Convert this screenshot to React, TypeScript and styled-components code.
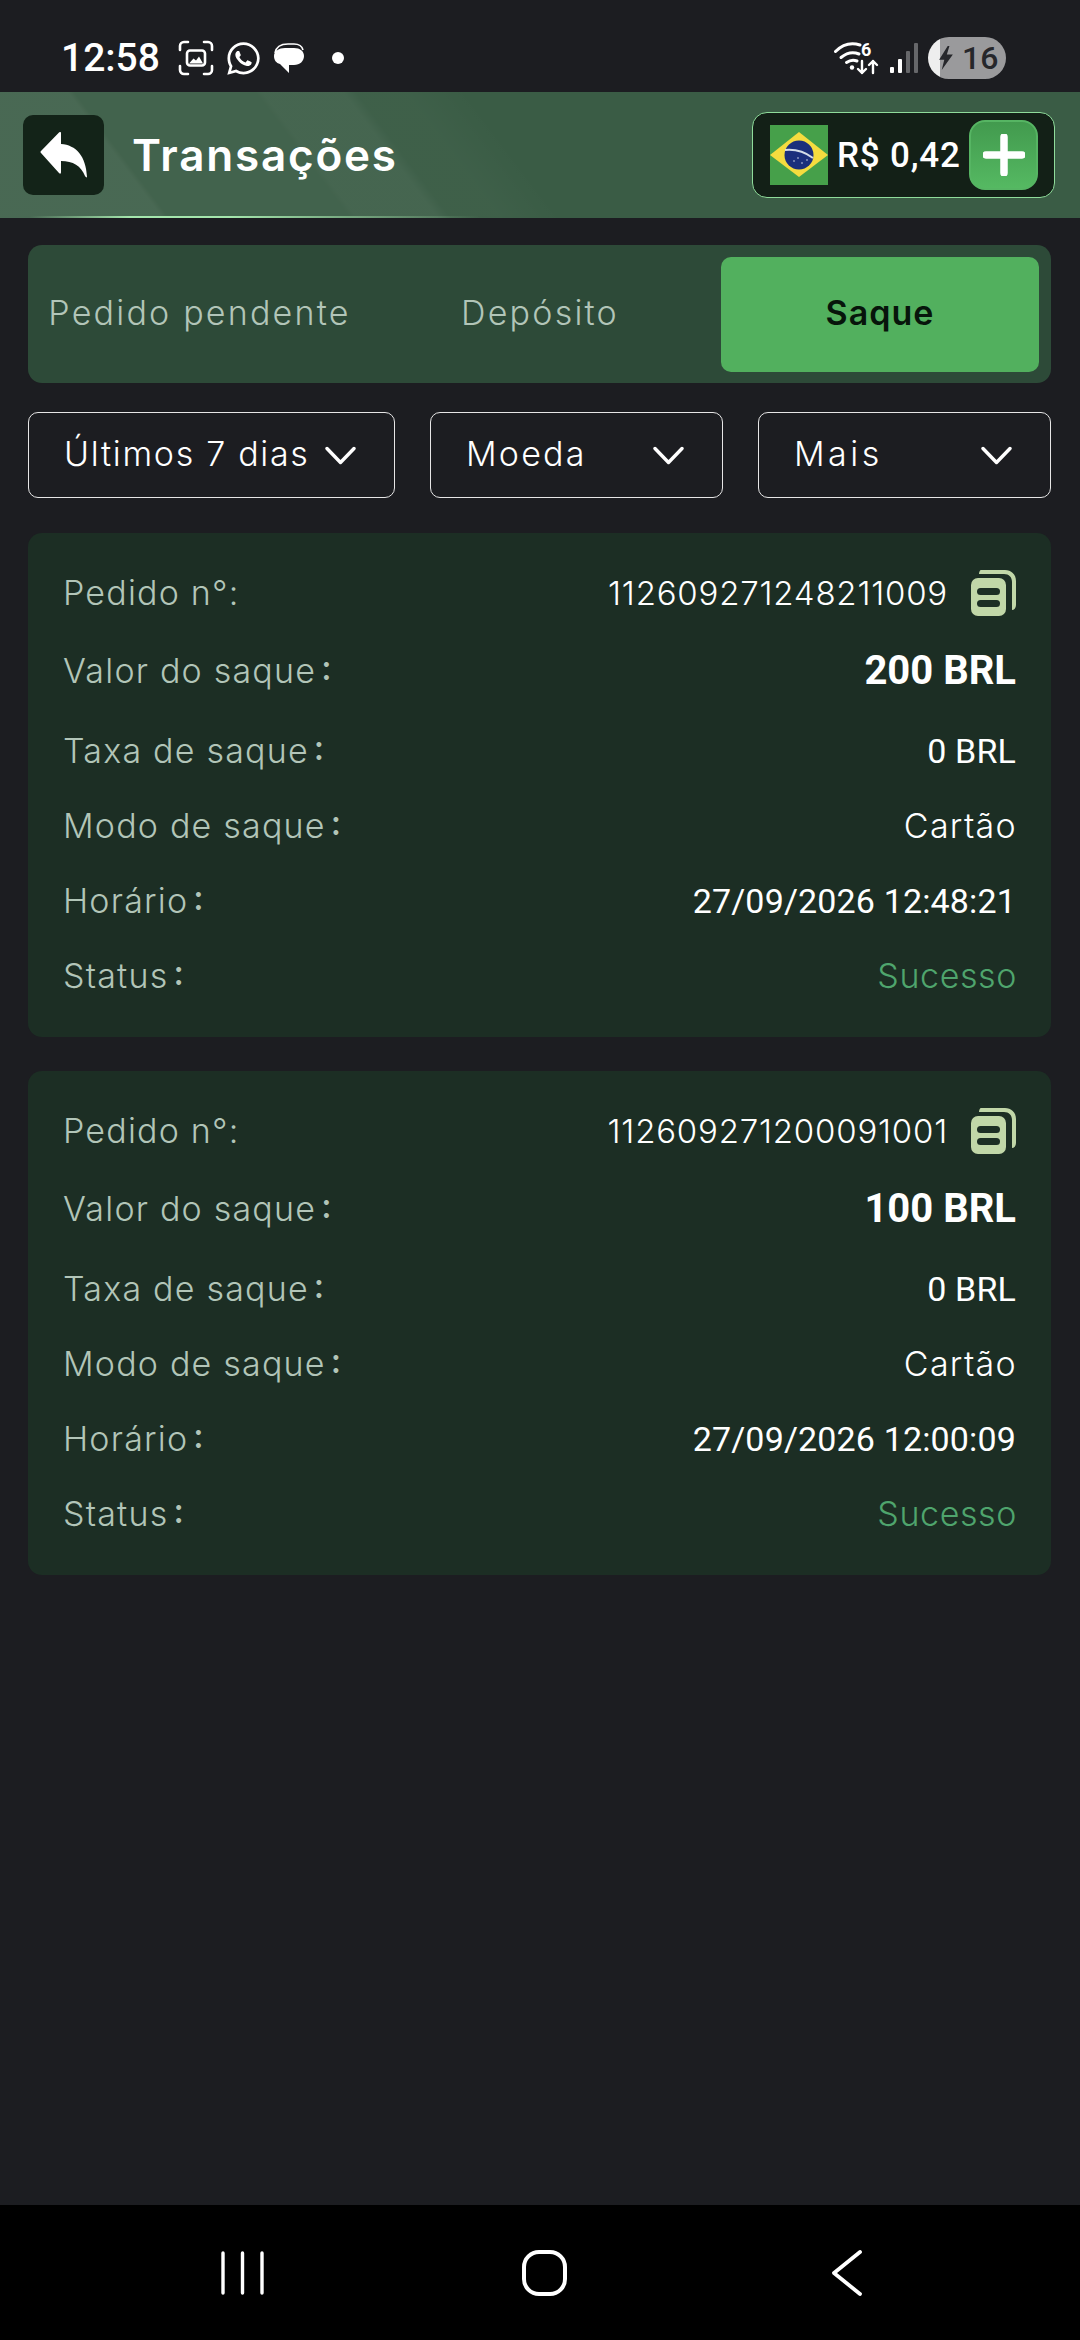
import React from "react"
import styled, { createGlobalStyle } from "styled-components"
import { FaWhatsapp } from "react-icons/fa"

const GlobalStyle = createGlobalStyle`
  html, body {
    margin: 0;
    padding: 0;
    background: #1c1d21;
  }
  * {
    box-sizing: border-box;
  }
`

const sans = `Inter, "Open Sans", sans-serif`
const roboto = `Roboto, "Liberation Sans", sans-serif`

const Page = styled.div`
  width: 1080px;
  height: 2340px;
  display: flex;
  flex-direction: column;
  background: #1c1d21;
  overflow: hidden;
`

const StatusBar = styled.div`
  height: 92px;
  flex: none;
  display: flex;
  align-items: center;
  padding: 24px 74px 0 61px;
  color: #fff;
`

const Clock = styled.span`
  font-family: ${roboto};
  font-weight: 500;
  font-size: 39px;
  width: 117px;
`

const StatusIcons = styled.div`
  display: flex;
  align-items: center;
  gap: 11px;
`

const StatusDot = styled.span`
  width: 12px;
  height: 12px;
  border-radius: 50%;
  background: #fff;
  margin-left: 16px;
`

const StatusRight = styled.div`
  margin-left: auto;
  display: flex;
  align-items: center;
  gap: 10px;
`

const WifiWrap = styled.div`
  position: relative;
  width: 46px;
  height: 34px;
`

const WifiBadge = styled.span`
  position: absolute;
  top: 0;
  left: 27px;
  color: #fff;
  font-family: ${roboto};
  font-weight: 700;
  font-size: 18px;
  line-height: 18px;
`

const Battery = styled.div`
  width: 78px;
  height: 42px;
  border-radius: 21px;
  display: flex;
  align-items: center;
  gap: 9px;
  padding-left: 11px;
  color: #26272b;
  font-family: ${roboto};
  font-weight: 500;
  font-size: 32px;
  background: linear-gradient(90deg, #eee 0 12px, #9a9a9c 12px);
`

const Header = styled.header`
  height: 126px;
  flex: none;
  display: flex;
  align-items: center;
  padding: 0 25px 0 23px;
  background:
    linear-gradient(90deg, transparent 30px, #a5e6ad 130px, #a5e6ad 230px, transparent 480px) bottom / 100% 2px no-repeat,
    linear-gradient(53deg,
      rgba(255,255,255,.08) 0 130px,
      rgba(255,255,255,.045) 135px 280px,
      rgba(255,255,255,.06) 285px 350px,
      rgba(255,255,255,.025) 360px 400px,
      transparent 450px),
    #3a5c45;
`

const BackButton = styled.button`
  width: 81px;
  height: 80px;
  border: 0;
  padding: 0;
  border-radius: 10px;
  background: #132318;
  display: flex;
  align-items: center;
  justify-content: center;
`

const Title = styled.h1`
  margin: 0 0 0 28px;
  color: #fff;
  font-family: ${sans};
  font-weight: 600;
  font-size: 44px;
  letter-spacing: 1.8px;
`

const Wallet = styled.div`
  margin-left: auto;
  width: 303px;
  height: 86px;
  border: 1.5px solid #8fdc9b;
  border-radius: 15px;
  background: #132017;
  display: flex;
  align-items: center;
  padding: 0 16px 0 17px;
`

const Balance = styled.span`
  margin-left: 9px;
  color: #fff;
  font-family: ${roboto};
  font-weight: 500;
  font-size: 35px;
  letter-spacing: 0.8px;
`

const PlusButton = styled.button`
  margin-left: auto;
  width: 69px;
  height: 70px;
  border: 2px solid #56b563;
  padding: 0;
  border-radius: 16px;
  background: linear-gradient(180deg, #429a4e, #55b962);
  display: flex;
  align-items: center;
  justify-content: center;
`

const Content = styled.main`
  flex: 1;
  display: flex;
  flex-direction: column;
  padding: 27px 29px 0 28px;
`

const Tabs = styled.div`
  height: 138px;
  border-radius: 14px;
  background: #2d4a38;
  display: grid;
  grid-template-columns: 335px 346px 1fr;
  align-items: center;
  padding: 0 12px 0 4px;
`

const Tab = styled.div<{ $active?: boolean }>`
  height: 115px;
  display: flex;
  align-items: center;
  justify-content: center;
  padding-bottom: 3px;
  margin-left: ${(p) => (p.$active ? "8px" : "0")};
  border-radius: 10px;
  font-family: ${sans};
  font-size: 34px;
  font-weight: ${(p) => (p.$active ? 600 : 300)};
  letter-spacing: ${(p) => (p.$active ? "1px" : "2.2px")};
  white-space: nowrap;
  color: ${(p) => (p.$active ? "#07150b" : "#b2c5b8")};
  background: ${(p) => (p.$active ? "#52b05e" : "transparent")};
`

const Filters = styled.div`
  margin-top: 29px;
  display: grid;
  grid-template-columns: 367px 293px 293px;
  justify-content: space-between;
`

const Filter = styled.div<{ $spacing: number }>`
  height: 86px;
  border: 1.5px solid #e6e6e6;
  border-radius: 10px;
  display: flex;
  align-items: center;
  justify-content: space-between;
  padding: 0 38px 3px 35px;
  color: #fff;
  font-family: ${sans};
  font-weight: 300;
  font-size: 34px;
  letter-spacing: ${(p) => p.$spacing}px;
`

const Chevron = styled.svg`
  flex: none;
  margin-top: 3px;
`

const Card = styled.section`
  margin-top: 35px;
  border-radius: 14px;
  background: #1c2e24;
  padding: 24px 35px 24px;
  display: flex;
  flex-direction: column;

  & + & {
    margin-top: 34px;
  }
`

const Row = styled.div<{ $h: number }>`
  height: ${(p) => p.$h}px;
  display: flex;
  align-items: center;
  justify-content: space-between;
`

const Label = styled.span`
  color: #b2c5b8;
  font-family: ${sans};
  font-weight: 300;
  font-size: 34px;
  letter-spacing: 1.2px;
`

const Colon = styled.span`
  display: inline-block;
  margin-left: 5px;
  line-height: 0;
  vertical-align: 3px;
  font-weight: 500;
`

const OrderValue = styled.div`
  display: flex;
  align-items: center;
  gap: 23px;
  color: #fff;
  font-family: ${sans};
  font-weight: 300;
  font-size: 33px;
  letter-spacing: 0.8px;
`

const Amount = styled.span`
  color: #fff;
  font-family: ${roboto};
  font-weight: 700;
  font-size: 40px;
`

const Plain = styled.span`
  color: #fff;
  font-family: ${roboto};
  font-weight: 400;
  font-size: 34px;
  letter-spacing: 0.15px;
`

const Method = styled.span<{ $success?: boolean }>`
  margin-right: -1px;
  color: ${(p) => (p.$success ? "#4fa56d" : "#fff")};
  font-family: ${sans};
  font-weight: 300;
  font-size: 34px;
  letter-spacing: ${(p) => (p.$success ? "0.6px" : "1.3px")};
`

const Spacer = styled.div`
  flex: 1;
`

const NavBar = styled.nav`
  height: 135px;
  flex: none;
  background: #000;
  display: grid;
  grid-template-columns: 221px 43px 258px 45px 265px 30px 218px;
  align-items: center;
`

const NavIcon = styled.svg<{ $col: number }>`
  grid-column: ${(p) => p.$col};
  display: block;
`

const ScanIcon = () => (
  <svg width="36" height="36" viewBox="0 0 36 36" fill="none">
    <path
      d="M2 10V6a4 4 0 0 1 4-4h4M26 2h4a4 4 0 0 1 4 4v4M34 26v4a4 4 0 0 1-4 4h-4M10 34H6a4 4 0 0 1-4-4v-4"
      stroke="#fff"
      strokeWidth="2.6"
      strokeLinecap="round"
    />
    <rect x="9" y="10.5" width="18" height="15" rx="3" stroke="#fff" strokeWidth="2.6" />
    <path d="M11 23.5l4.5-5 2.5 2 3-4 4 7z" fill="#fff" />
  </svg>
)

const BubbleIcon = () => (
  <svg width="32" height="32" viewBox="0 0 32 32">
    <path d="M2 11C3 5 8 2 15 2h6c4 0 8 2 9 6" fill="none" stroke="#fff" strokeWidth="1.6" />
    <path
      d="M1 14c0-5 5-8 11-8h9c6 0 10 3 10 8s-4 9-10 9h-5v8L7 22c-4-1-6-4-6-8z"
      fill="#fff"
    />
  </svg>
)

const WifiIcon = () => (
  <WifiWrap>
    <svg width="46" height="34" viewBox="0 0 46 34" fill="none">
      <path d="M1.5 10.5C9 3 18 1.500 26 4" stroke="#fff" strokeWidth="3" strokeLinecap="round" />
      <path d="M7 16.5c6-5 12-6 18-3.500" stroke="#fff" strokeWidth="3" strokeLinecap="round" />
      <path d="M12.5 21.5c3.5-2.5 7-3 10.500-1.500" stroke="#fff" strokeWidth="3" strokeLinecap="round" />
      <circle cx="18" cy="26.5" r="2.2" fill="#fff" />
      <path
        d="M28 20v12M24 28l4 4 4-4M39 32V20M35 24l4-4 4 4"
        stroke="#fff"
        strokeWidth="2.4"
        strokeLinecap="round"
        strokeLinejoin="round"
      />
    </svg>
    <WifiBadge>6</WifiBadge>
  </WifiWrap>
)

const SignalIcon = () => (
  <svg width="28" height="30" viewBox="0 0 28 30">
    <rect x="0" y="24" width="4" height="6" rx="1" fill="#fff" />
    <rect x="8" y="16" width="4" height="14" rx="1" fill="#fff" />
    <rect x="16" y="8" width="4" height="22" rx="1" fill="#66676a" />
    <rect x="24" y="0" width="4" height="30" rx="1" fill="#66676a" />
  </svg>
)

const BoltIcon = () => (
  <svg width="14" height="24" viewBox="0 0 16 28">
    <path d="M10 0L0 16h6L3 28 16 10H9l3-10z" fill="#26272b" />
  </svg>
)

const BackArrow = () => (
  <svg width="48" height="46" viewBox="0 0 48 46">
    <path
      d="M21 1v11c15 1 25 12 26 33-1 1-1 0-2-1-4-10-12-15-24-15v11c0 2-1 2-2 1L1 21c-.7-.7-.7-1.300 0-2L19 .5c1-1 2-.5 2 .5z"
      fill="#fff"
    />
  </svg>
)

const BrazilFlag = () => (
  <svg width="58" height="60" viewBox="0 0 58 60">
    <rect width="58" height="60" fill="#46a04a" />
    <path d="M29 7L58 30 29 52 0 30z" fill="#f5dc3f" />
    <circle cx="29" cy="30" r="14.500" fill="#1b2f7c" />
    <path d="M15 25c10-1 20 2 28 8" stroke="#d5dde8" strokeWidth="2" fill="none" />
    <circle cx="24" cy="36" r=".8" fill="#cfd6ea" />
    <circle cx="32" cy="38" r=".8" fill="#cfd6ea" />
    <circle cx="37" cy="35" r=".8" fill="#cfd6ea" />
    <circle cx="28" cy="33" r=".8" fill="#cfd6ea" />
  </svg>
)

const PlusIcon = () => (
  <svg width="42" height="42" viewBox="0 0 42 42">
    <path d="M21 3v36M3 21h36" stroke="#fff" strokeWidth="7.500" strokeLinecap="round" />
  </svg>
)

const ChevronDown = () => (
  <Chevron width="31" height="19" viewBox="0 0 31 19" fill="none">
    <path d="M2 2.500l13.500 14L29 2.500" stroke="#fff" strokeWidth="3.400" strokeLinecap="round" strokeLinejoin="round" />
  </Chevron>
)

const CopyIcon = () => (
  <svg width="45" height="47" viewBox="0 0 45 47">
    <path
      d="M10 1h24c6 0 11 4 11 11v24c0 3-2 5-4 5V13c0-5-3-8-8-8H8c0-2 1-4 2-4z"
      fill="#c1d7a8"
    />
    <rect x="0" y="9" width="35" height="38" rx="7" fill="#c1d7a8" />
    <rect x="6" y="19" width="23" height="7" rx="3.500" fill="#1c2e24" />
    <rect x="6" y="31" width="23" height="7" rx="3.500" fill="#1c2e24" />
  </svg>
)

type Transaction = {
  order: string
  amount: string
  time: string
}

const transactions: Transaction[] = [
  { order: "112609271248211009", amount: "200 BRL", time: "27/09/2026 12:48:21" },
  { order: "112609271200091001", amount: "100 BRL", time: "27/09/2026 12:00:09" },
]

const App = () => {
  return (
    <Page>
      <GlobalStyle />
      <StatusBar>
        <Clock>12:58</Clock>
        <StatusIcons>
          <ScanIcon />
          <FaWhatsapp size={37} color="#fff" />
          <BubbleIcon />
          <StatusDot />
        </StatusIcons>
        <StatusRight>
          <WifiIcon />
          <SignalIcon />
          <Battery>
            <BoltIcon />
            16
          </Battery>
        </StatusRight>
      </StatusBar>

      <Header>
        <BackButton>
          <BackArrow />
        </BackButton>
        <Title>Transações</Title>
        <Wallet>
          <BrazilFlag />
          <Balance>R$ 0,42</Balance>
          <PlusButton>
            <PlusIcon />
          </PlusButton>
        </Wallet>
      </Header>

      <Content>
        <Tabs>
          <Tab>Pedido pendente</Tab>
          <Tab>Depósito</Tab>
          <Tab $active>Saque</Tab>
        </Tabs>

        <Filters>
          <Filter $spacing={1.7}>
            Últimos 7 dias
            <ChevronDown />
          </Filter>
          <Filter $spacing={2.2}>
            Moeda
            <ChevronDown />
          </Filter>
          <Filter $spacing={3.5}>
            Mais
            <ChevronDown />
          </Filter>
        </Filters>

        {transactions.map((t) => (
          <Card key={t.order}>
            <Row $h={71}>
              <Label>Pedido n°:</Label>
              <OrderValue>
                {t.order}
                <CopyIcon />
              </OrderValue>
            </Row>
            <Row $h={85}>
              <Label>
                Valor do saque<Colon>:</Colon>
              </Label>
              <Amount>{t.amount}</Amount>
            </Row>
            <Row $h={75}>
              <Label>
                Taxa de saque<Colon>:</Colon>
              </Label>
              <Plain>0 BRL</Plain>
            </Row>
            <Row $h={75}>
              <Label>
                Modo de saque<Colon>:</Colon>
              </Label>
              <Method>Cartão</Method>
            </Row>
            <Row $h={75}>
              <Label>
                Horário<Colon>:</Colon>
              </Label>
              <Plain>{t.time}</Plain>
            </Row>
            <Row $h={75}>
              <Label>
                Status<Colon>:</Colon>
              </Label>
              <Method $success>Sucesso</Method>
            </Row>
          </Card>
        ))}
        <Spacer />
      </Content>

      <NavBar>
        <NavIcon $col={2} width="43" height="44" viewBox="0 0 43 44">
          <path d="M2 2v40M21.500 2v40M41 2v40" stroke="#fff" strokeWidth="3.400" strokeLinecap="round" />
        </NavIcon>
        <NavIcon $col={4} width="45" height="46" viewBox="0 0 45 46" fill="none">
          <rect x="2" y="2" width="41" height="42" rx="15" stroke="#fff" strokeWidth="4" />
        </NavIcon>
        <NavIcon $col={6} width="30" height="46" viewBox="0 0 30 46" fill="none">
          <path d="M28 2L2 23l26 21" stroke="#fff" strokeWidth="3.800" strokeLinecap="round" strokeLinejoin="round" />
        </NavIcon>
      </NavBar>
    </Page>
  )
}

export default App
